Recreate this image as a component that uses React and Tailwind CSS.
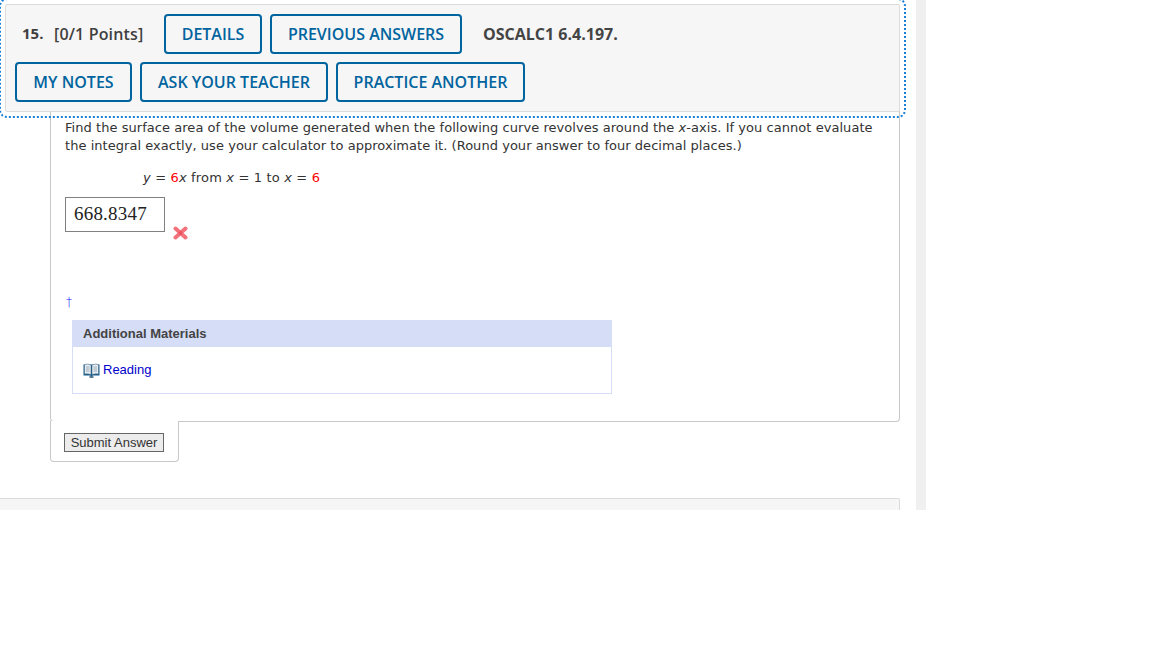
const BTN = "h-[40px] border-2 border-[#00649e] rounded-[4px] text-[#00649e] text-[16px] font-semibold font-['Open_Sans',sans-serif] flex items-center justify-center whitespace-nowrap";

function Book() {
  return (
    <svg width="17" height="15" viewBox="0 0 17 15" className="block">
      <path d="M0.5 1.5 L0.5 12.5 L7 12.5 L8.5 13.5 L10 12.5 L16.5 12.5 L16.5 1.5 Z" fill="#1f5f8f" />
      <path d="M1.5 1.5 Q5 0.5 8 2 L8 11.5 Q5 10.5 1.5 11 Z" fill="#e6edf2" stroke="#35607f" strokeWidth="0.5" />
      <path d="M15.5 1.5 Q12 0.5 9 2 L9 11.5 Q12 10.5 15.5 11 Z" fill="#e6edf2" stroke="#35607f" strokeWidth="0.5" />
      <path d="M3 4h3.5M3 6h3.5M3 8h3.5M10.5 4H14M10.5 6H14M10.5 8H14" stroke="#8a9aa6" strokeWidth="0.8" />
      <rect x="6.5" y="13.3" width="4" height="1.4" fill="#17466b" />
    </svg>
  );
}

function Cross() {
  return (
    <svg width="15" height="14" viewBox="0 0 15 14" className="block">
      <path d="M2.5 2.5 L12.5 11.5 M12.5 2.5 L2.5 11.5" stroke="#f4727a" strokeWidth="4" strokeLinecap="round" />
      <circle cx="7.5" cy="7" r="2" fill="#ec5560" />
    </svg>
  );
}

function V({ children }) {
  return <i>{children}</i>;
}

function R({ children }) {
  return <span className="text-[#f00]">{children}</span>;
}

export default function App() {
  return (
    <div className="w-[1152px] h-[648px] bg-white overflow-hidden">
      <div className="w-[926px] h-[510px] flex overflow-hidden">
        <div className="w-[916px] shrink-0 flex flex-col">
          <div className="relative z-10 ml-[5px] mt-[4px] w-[895px] h-[108px] shrink-0 bg-[#f6f6f6] border border-[#dcdcdc] rounded-[2px] outline-2 outline-dotted outline-[#1a7fd8] outline-offset-[4px] flex flex-col gap-[8px] pl-[9px] pt-[9px] font-['Open_Sans',sans-serif] text-[#3f3f3f]">
            <div className="flex items-center h-[40px]">
              <span className="ml-[7px] text-[15px] font-bold relative top-[-1px] w-[32px]">15.</span>
              <span className="text-[16px] font-semibold tracking-[0.15px] w-[110px]">[0/1 Points]</span>
              <div className={BTN + " w-[98px]"}>DETAILS</div>
              <div className={BTN + " ml-[8px] w-[192px]"}>PREVIOUS ANSWERS</div>
              <span className="ml-[21px] text-[16px] font-bold text-[#444]">OSCALC1 6.4.197.</span>
            </div>
            <div className="flex items-center gap-[8px]">
              <div className={BTN + " w-[117px]"}>MY NOTES</div>
              <div className={BTN + " w-[188px]"}>ASK YOUR TEACHER</div>
              <div className={BTN + " w-[189px]"}>PRACTICE ANOTHER</div>
            </div>
          </div>

          <div className="ml-[50px] w-[850px] h-[311px] shrink-0 -mt-[1px] border border-t-0 border-[#c8c8c8] rounded-b-[4px] pl-[14px] pt-[8px] font-['DejaVu_Sans',sans-serif] text-[13px] leading-[18px] text-[#333]">
            <p className="whitespace-nowrap tracking-[0.047px]">Find the surface area of the volume generated when the following curve revolves around the <V>x</V>-axis. If you cannot evaluate</p>
            <p className="whitespace-nowrap tracking-[0.04px]">the integral exactly, use your calculator to approximate it. (Round your answer to four decimal places.)</p>
            <p className="ml-[78px] mt-[14px] whitespace-nowrap tracking-[0.16px]">
              <V>y</V> = <R>6</R><V>x</V> from <V>x</V> = 1 to <V>x</V> = <R>6</R>
            </p>
            <div className="flex mt-[10px]">
              <div className="w-[100px] h-[35px] border border-[#808080] pl-[8px] pb-[2px] flex items-center font-['Liberation_Serif',serif] text-[19px] tracking-[0.2px] text-[#222]">668.8347</div>
              <div className="ml-[8px] mt-[29px]"><Cross /></div>
            </div>
            <div className="mt-[51px] h-[22px] pl-[1px] text-[12px] leading-[22px] text-[#2222ff] font-['DejaVu_Sans',sans-serif] font-light">†</div>
            <div className="ml-[7px] mt-[7px] w-[540px] h-[74px] border border-[#d6ddf6] border-t-0 font-['Liberation_Sans',sans-serif]">
              <div className="-mx-[1px] h-[27px] bg-[#d6ddf6] pl-[11px] flex items-center text-[13px] font-bold text-[#444]">Additional Materials</div>
              <div className="pl-[10px] pt-[14px] flex items-center gap-[3px] text-[13px] text-[#0000cc]">
                <Book />
                <span>Reading</span>
              </div>
            </div>
          </div>

          <div className="ml-[50px] w-[129px] h-[41px] shrink-0 -mt-[1px] bg-white border border-t-0 border-[#c8c8c8] rounded-b-[4px] pl-[13px] pt-[12px] relative">
            <div className="h-[19px] w-[100px] border border-[#666] bg-[#ececec] flex items-center justify-center font-['Liberation_Sans',sans-serif] text-[13px] text-[#333] whitespace-nowrap">Submit Answer</div>
          </div>

          <div className="mt-[36px] w-[900px] h-[40px] shrink-0 bg-[#f6f6f6] border border-[#dcdcdc] border-l-0 rounded-tr-[2px]"></div>
        </div>
        <div className="w-[10px] shrink-0 bg-[#f0f0f0]"></div>
      </div>
    </div>
  );
}
